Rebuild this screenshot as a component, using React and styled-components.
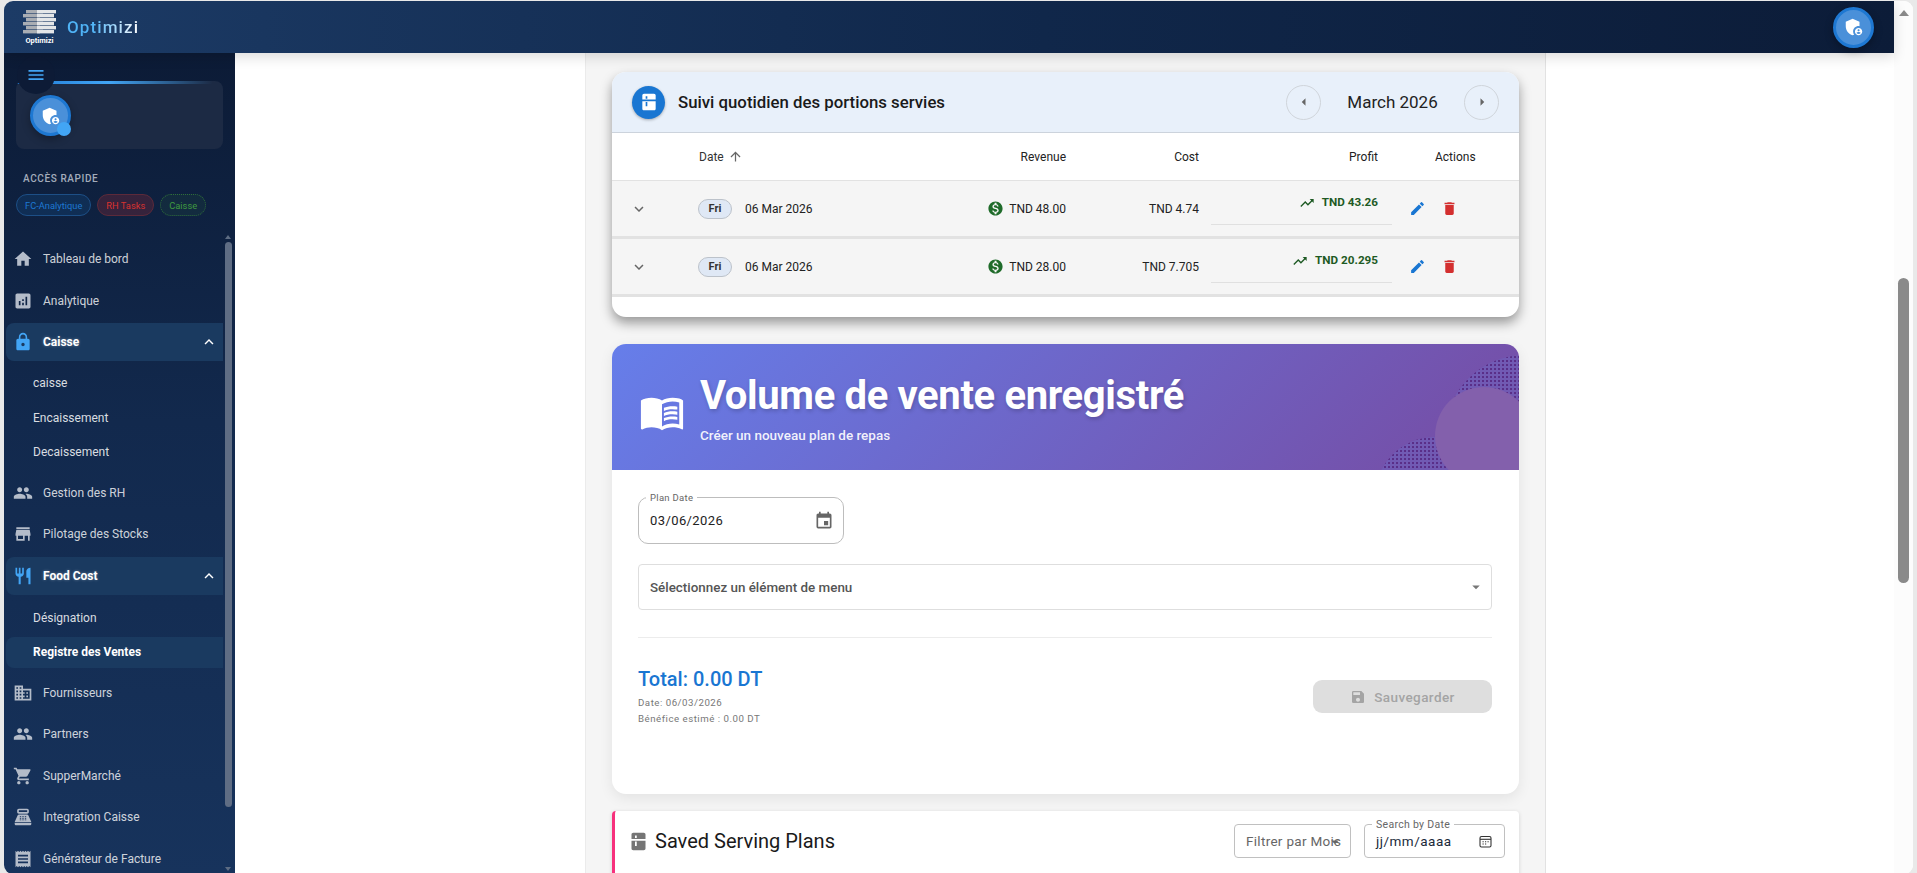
import React from "react";
import styled, { createGlobalStyle } from "styled-components";
import {
  MdHome, MdAnalytics, MdLock, MdPeople, MdStore, MdRestaurant, MdDomain,
  MdShoppingCart, MdPointOfSale, MdReceipt, MdKitchen, MdAdminPanelSettings,
  MdMenuBook, MdEdit, MdDelete, MdTrendingUp, MdMonetizationOn, MdKeyboardArrowDown,
  MdKeyboardArrowUp, MdArrowLeft, MdArrowRight, MdArrowUpward, MdEvent, MdSave,
  MdArrowDropDown, MdMenu,
} from "react-icons/md";

const GlobalStyle = createGlobalStyle`
  html, body { margin: 0; padding: 0; height: 100%; overflow: hidden; background: #e9e9e9; }
  * { box-sizing: border-box; }
  body { font-family: Roboto, "Liberation Sans", sans-serif; }
`;

const Frame = styled.div`
  display: flex;
  height: 873px;
  margin: 1px 4px 0;
  background: #fff;
  border-radius: 9px;
  overflow: hidden;
`;

const Page = styled.div`
  flex: 1;
  min-width: 0;
  display: flex;
  flex-direction: column;
`;

const TopBar = styled.header`
  position: relative;
  z-index: 3;
  flex: 0 0 52px;
  display: flex;
  align-items: center;
  justify-content: space-between;
  padding: 0 0 0 18px;
  background: linear-gradient(90deg, #1c3b66 0%, #10274a 55%, #0c1c38 100%);
  box-shadow: 0 4px 12px rgba(0, 0, 0, 0.14);
`;

const Brand = styled.div`
  display: flex;
  align-items: center;
  gap: 10px;
`;

const LogoBox = styled.div`
  display: flex;
  flex-direction: column;
  align-items: center;
  width: 35px;
`;

const LogoText = styled.span`
  margin-top: 2px;
  font-size: 7.5px;
  line-height: 9px;
  font-weight: 700;
  color: #fff;
`;

const BrandName = styled.span`
  font-size: 17px;
  font-weight: 500;
  letter-spacing: 1.1px;
  background: linear-gradient(90deg, #4fb3f6 0%, #4fb3f6 35%, #ffffff 100%);
  -webkit-background-clip: text;
  background-clip: text;
  color: transparent;
`;

const Avatar = styled.div`
  position: relative;
  flex: none;
  display: flex;
  align-items: center;
  justify-content: center;
  width: 41px;
  height: 41px;
  border-radius: 50%;
  background: #4a90d9;
  border: 3px solid #1e78d2;
  color: #fff;
  box-shadow: 0 3px 8px rgba(0, 0, 0, 0.3);
`;

const TopAvatar = styled(Avatar)`
  margin-right: 20px;
`;

const Body = styled.div`
  flex: 1;
  min-height: 0;
  display: flex;
`;

const Sidebar = styled.aside`
  position: relative;
  flex: 0 0 231px;
  display: flex;
  flex-direction: column;
  background: linear-gradient(180deg, #0c1b36 0%, #12294d 45%, #17335c 100%);
`;

const SideHead = styled.div`
  flex: 0 0 179px;
  padding: 28px 12px 0;
`;

const MenuButton = styled.div`
  position: absolute;
  left: 13px;
  top: 3px;
  z-index: 2;
  display: flex;
  align-items: center;
  justify-content: center;
  width: 38px;
  height: 38px;
  border-radius: 50%;
  background: #0d1b36;
  color: #42a5f5;
`;

const ProfileCard = styled.div`
  position: relative;
  height: 68px;
  padding: 14px 14px;
  border-radius: 8px;
  background: #1c2a44;
  overflow: hidden;

  &::before {
    content: "";
    position: absolute;
    top: 0;
    left: 0;
    width: 100%;
    height: 3px;
    background: linear-gradient(90deg, #1e78d2 0%, #42a5f5 45%, transparent 95%);
  }
`;

const ProfileAvatar = styled(Avatar)`
  overflow: visible;
`;

const OnlineDot = styled.span`
  position: absolute;
  right: -3px;
  bottom: -3px;
  width: 14px;
  height: 14px;
  border-radius: 50%;
  background: #42a5f5;
`;

const QuickTitle = styled.div`
  margin: 24px 0 9px 7px;
  font-size: 10px;
  line-height: 12px;
  letter-spacing: 0.6px;
  font-weight: 500;
  color: #a3acbb;
`;

const ChipRow = styled.div`
  display: flex;
  gap: 6px;
`;

const QuickChip = styled.span`
  display: flex;
  align-items: center;
  height: 22px;
  padding: 0 8px;
  border-radius: 11px;
  font-size: 9.3px;
  color: ${(p) => p.$color};
  background: ${(p) => p.$bg};
  border: 1px ${(p) => p.$line || "solid"} ${(p) => p.$border};
`;

const NavArea = styled.div`
  flex: 1;
  min-height: 0;
  display: flex;
`;

const NavList = styled.nav`
  flex: 1;
  min-width: 0;
  padding: 8px 0 0 2px;
  overflow: hidden;
`;

const NavItem = styled.div`
  display: flex;
  align-items: center;
  height: 38px;
  margin-bottom: 3.5px;
  padding: 0 5px 0 7px;
  border-radius: 8px 0 0 8px;
  font-size: 12px;
  white-space: nowrap;
  font-weight: ${(p) => (p.$open ? 700 : 400)};
  color: ${(p) => (p.$open ? "#fff" : "rgba(255,255,255,0.8)")};
  background: ${(p) => (p.$open ? "#1a3a60" : "transparent")};
  text-shadow: ${(p) => (p.$open ? "0 0 3px rgba(255,255,255,0.35)" : "none")};

  svg:first-child {
    flex: none;
    font-size: 20px;
    margin-right: 10px;
    color: ${(p) => (p.$open ? "#42a5f5" : "#b4bcc9")};
  }
`;

const ItemLabel = styled.span`
  flex: 1;
`;

const SubList = styled.div`
  padding: ${(p) => p.$top}px 0 2.5px;
`;

const SubItem = styled.div`
  display: flex;
  align-items: center;
  height: 31px;
  margin-bottom: 3.5px;
  padding-left: 27px;
  border-radius: 8px 0 0 8px;
  font-size: 12px;
  font-weight: ${(p) => (p.$active ? 700 : 400)};
  color: ${(p) => (p.$active ? "#fff" : "rgba(255,255,255,0.85)")};
  background: ${(p) => (p.$active ? "#1a3a60" : "transparent")};
`;

const SideScroll = styled.div`
  flex: 0 0 12px;
  display: flex;
  flex-direction: column;
  align-items: center;
  padding-right: 2px;
`;

const SideArrow = styled.span`
  width: 0;
  height: 0;
  margin: 3px 0;
  border-left: 3.5px solid transparent;
  border-right: 3.5px solid transparent;
  border-${(p) => (p.$down ? "top" : "bottom")}: 4px solid #5d6c83;
`;

const SideThumb = styled.div`
  width: 7px;
  height: 565px;
  border-radius: 4px;
  background: #5f6d84;
`;

const SideSpacer = styled.div`
  flex: 1;
`;

const Main = styled.main`
  flex: 1;
  min-width: 0;
  display: flex;
  justify-content: center;
  overflow: hidden;
`;

const Panel = styled.div`
  flex: 0 0 961px;
  margin-left: 2px;
  padding: 19px 26px 0;
  background: #f5f5f5;
  border-left: 1px solid #ebebeb;
  border-right: 1px solid #e2e2e2;
`;

const TableCard = styled.section`
  height: 245px;
  margin-bottom: 27px;
  background: #fff;
  border-radius: 14px;
  overflow: hidden;
  box-shadow: 0 6px 12px rgba(0, 0, 0, 0.38);
`;

const TableHeader = styled.div`
  display: flex;
  align-items: center;
  height: 61px;
  padding: 0 20px;
  background: #e8f0fa;
  border-bottom: 1px solid #ccd3dc;
`;

const RoundIcon = styled.div`
  display: flex;
  align-items: center;
  justify-content: center;
  width: 33px;
  height: 33px;
  margin-right: 13px;
  border-radius: 50%;
  background: #1976d2;
  color: #fff;
  box-shadow: 0 1px 3px rgba(0, 0, 0, 0.3);
`;

const CardTitle = styled.h2`
  flex: 1;
  margin: 0;
  font-size: 16.8px;
  font-weight: 500;
  color: #1a1a1a;
`;

const MonthNav = styled.div`
  display: flex;
  align-items: center;
`;

const RoundButton = styled.div`
  display: flex;
  align-items: center;
  justify-content: center;
  width: 35px;
  height: 35px;
  border-radius: 50%;
  border: 1px solid #cfd4da;
  color: #666;
  font-size: 18px;
`;

const MonthLabel = styled.span`
  width: 143px;
  text-align: center;
  font-size: 17px;
  color: #222;
`;

const GridRow = styled.div`
  display: grid;
  grid-template-columns: 71px 267px 132px 129px 181px 127px;
  font-size: 12px;
  color: #222;
`;

const HeadRow = styled(GridRow)`
  height: 48px;
  align-items: center;
  border-bottom: 1px solid #e2e2e2;
`;

const DataRow = styled(GridRow)`
  height: 58px;
  align-items: center;
  background: #f5f5f5;
  border-bottom: 3px solid #e2e2e2;
`;

const DateHead = styled.div`
  display: flex;
  align-items: center;
  gap: 4px;
  padding-left: 16px;
  color: #333;

  svg {
    font-size: 15px;
    color: #666;
  }
`;

const RightCell = styled.div`
  display: flex;
  align-items: center;
  justify-content: flex-end;
  gap: 5px;
  padding-right: ${(p) => p.$pad || 16}px;
`;

const ActionsHead = styled.div`
  padding-left: 43px;
`;

const ExpandCell = styled.div`
  display: flex;
  padding-left: 18px;
  font-size: 18px;
  color: #666;
`;

const DateCell = styled.div`
  display: flex;
  align-items: center;
  gap: 13px;
  padding-left: 15px;
`;

const DayChip = styled.span`
  display: flex;
  align-items: center;
  justify-content: center;
  width: 34px;
  height: 20px;
  border-radius: 10px;
  border: 1px solid #bcc2ca;
  background: #dfe8f5;
  font-size: 11px;
  font-weight: 700;
  color: #333;
`;

const MoneyIcon = styled(MdMonetizationOn)`
  font-size: 17px;
  color: #1f6b2a;
`;

const ProfitCell = styled.div`
  align-self: stretch;
  display: flex;
  flex-direction: column;
`;

const ProfitValue = styled.div`
  flex: 0 0 44px;
  display: flex;
  justify-content: flex-end;
  align-items: center;
  gap: 7px;
  padding: 0 14px 0 0;
  border-bottom: 1px solid #e0e0e0;
  font-size: 11.7px;
  font-weight: 700;
  color: #1e5a24;

  span {
    display: block;
    margin-bottom: 1px;
  }

  svg {
    font-size: 16px;
  }
`;

const ActionCell = styled.div`
  display: flex;
  align-items: center;
  gap: 15px;
  padding-left: 17px;
  font-size: 17px;
`;

const EditIcon = styled(MdEdit)`
  color: #1976d2;
`;

const DeleteIcon = styled(MdDelete)`
  color: #d32f2f;
`;

const FormCard = styled.section`
  height: 450px;
  margin-bottom: 17px;
  background: #fff;
  border-radius: 14px;
  overflow: hidden;
  box-shadow: 0 4px 14px rgba(0, 0, 0, 0.08);
`;

const Banner = styled.div`
  position: relative;
  display: flex;
  align-items: center;
  height: 126px;
  padding: 0 26px 0 27px;
  overflow: hidden;
  color: #fff;
  background: linear-gradient(135deg, #667eea 0%, #764ba2 100%);
`;

const BannerIcon = styled(MdMenuBook)`
  flex: none;
  margin: 10px 15px 0 0;
  font-size: 46px;
`;

const BannerTitle = styled.h1`
  margin: 0 0 9px;
  font-size: 40px;
  line-height: 47px;
  font-weight: 700;
  letter-spacing: -0.36px;
  text-shadow: 1px 2px 4px rgba(0, 0, 0, 0.2);
`;

const BannerSub = styled.div`
  font-size: 13.5px;
  line-height: 15px;
  font-weight: 500;
  color: rgba(255, 255, 255, 0.92);
`;

const Bubble = styled.span`
  position: absolute;
  left: ${(p) => p.$x}px;
  top: ${(p) => p.$y}px;
  width: ${(p) => p.$size}px;
  height: ${(p) => p.$size}px;
  border-radius: 50%;
  background: ${(p) =>
    p.$dotted
      ? "radial-gradient(circle, #5a2e88 0.7px, transparent 1px) 0 0 / 4px 4px, rgba(110, 100, 190, 0.5)"
      : "#8360ac"};
`;

const FormBody = styled.div`
  padding: 27px 27px 0 26px;
`;

const OutlinedDate = styled.div`
  position: relative;
  display: flex;
  align-items: center;
  justify-content: space-between;
  width: 206px;
  height: 47px;
  padding: 0 9px 0 11px;
  border: 1px solid #bdbdbd;
  border-radius: 10px;
  font-size: 13px;
  letter-spacing: 0.4px;
  color: #222;

  svg {
    font-size: 20px;
    color: #666;
  }
`;

const FloatLabel = styled.span`
  position: absolute;
  left: ${(p) => p.$left || 7}px;
  top: -6px;
  padding: 0 4px;
  background: #fff;
  font-size: ${(p) => p.$size || 9.5}px;
  line-height: 12px;
  letter-spacing: 0.3px;
  color: #666;
`;

const MenuSelect = styled.div`
  display: flex;
  align-items: center;
  justify-content: space-between;
  height: 46px;
  margin-top: 20px;
  padding: 0 6px 0 11px;
  border: 1px solid #dedede;
  border-radius: 4px;
  font-size: 13.4px;
  font-weight: 500;
  color: #555;

  svg {
    font-size: 18px;
    color: #777;
  }
`;

const Divider = styled.hr`
  margin: 27px 0 0;
  border: 0;
  border-top: 1px solid #ececec;
`;

const SummaryRow = styled.div`
  display: flex;
  align-items: flex-start;
  justify-content: space-between;
  padding-top: 29px;
`;

const TotalText = styled.div`
  font-size: 20px;
  line-height: 24px;
  font-weight: 500;
  color: #1976d2;
`;

const MetaText = styled.div`
  margin-top: ${(p) => p.$top || 0}px;
  font-size: 9.7px;
  line-height: 16px;
  letter-spacing: 0.5px;
  color: #777;
`;

const SaveButton = styled.div`
  display: flex;
  align-items: center;
  justify-content: center;
  gap: 8px;
  width: 179px;
  height: 33px;
  margin-top: 13px;
  border-radius: 9px;
  background: #dedede;
  font-size: 13.5px;
  font-weight: 500;
  letter-spacing: 0.4px;
  color: #a4a4a4;

  svg {
    font-size: 16px;
  }
`;

const SavedCard = styled.section`
  display: flex;
  align-items: flex-start;
  justify-content: space-between;
  height: 120px;
  padding: 13px 14px 0 13px;
  background: #fff;
  border-left: 3px solid #f7317c;
  border-radius: 4px;
  box-shadow: 0 1px 4px rgba(0, 0, 0, 0.14);
`;

const SavedTitle = styled.div`
  display: flex;
  align-items: center;
  height: 34px;
  gap: 6px;
  font-size: 20px;
  color: #1a1a1a;

  svg {
    font-size: 21px;
    color: #757575;
  }
`;

const Filters = styled.div`
  display: flex;
  gap: 13px;
`;

const FilterSelect = styled.div`
  position: relative;
  display: flex;
  align-items: center;
  width: 117px;
  height: 34px;
  padding-left: 11px;
  border: 1px solid #c0c0c0;
  border-radius: 4px;
  font-size: 13.5px;
  letter-spacing: 0.3px;
  white-space: nowrap;
  color: #666;

  svg {
    position: absolute;
    right: 6px;
    top: 8px;
    font-size: 18px;
    color: #666;
  }
`;

const FilterDate = styled.div`
  position: relative;
  display: flex;
  align-items: center;
  justify-content: space-between;
  width: 141px;
  height: 34px;
  padding: 0 12px 0 11px;
  border: 1px solid #c0c0c0;
  border-radius: 4px;
  font-size: 13.5px;
  letter-spacing: 0.5px;
  color: #1a2a3a;
`;

const PageScroll = styled.div`
  position: relative;
  flex: 0 0 19px;
  display: flex;
  flex-direction: column;
  align-items: center;
  background: #fcfcfc;
`;

const PageArrow = styled.span`
  width: 0;
  height: 0;
  margin-top: 9px;
  border-left: 5px solid transparent;
  border-right: 5px solid transparent;
  border-bottom: 6px solid #8a8a8a;
`;

const PageThumb = styled.div`
  width: 11px;
  height: 305px;
  margin-top: 262px;
  border-radius: 6px;
  background: #8a8a8a;
`;

const LogoMark = () => (
  <svg width="33" height="24" viewBox="0 0 33 24">
    {[0, 4, 8, 12, 16, 20].map((y, i) => (
      <g key={y}>
        <rect x={i % 2 ? 0 : 3} y={y} width="17" height="3.4" fill="#a9adb3" />
        <rect x="14" y={y} width={i % 2 ? 17 : 19} height="3.4" fill="#e4e6e8" />
      </g>
    ))}
  </svg>
);

const CalendarGlyph = () => (
  <svg width="13" height="13" viewBox="0 0 13 13" fill="none" stroke="#333" strokeWidth="1.1">
    <rect x="1" y="1.5" width="11" height="10.5" rx="1.5" />
    <path d="M1 4.3h11" />
    <path d="M3.5 6.7h1.2M6 6.7h1.2M8.5 6.7h1.2M3.5 9h1.2M6 9h1.2" />
  </svg>
);

const rows = [
  { id: 1, revenue: "TND 48.00", cost: "TND 4.74", profit: "TND 43.26" },
  { id: 2, revenue: "TND 28.00", cost: "TND 7.705", profit: "TND 20.295" },
];

const App = () => {
  return (
    <>
      <GlobalStyle />
      <Frame>
        <Page>
          <TopBar>
            <Brand>
              <LogoBox>
                <LogoMark />
                <LogoText>Optimizi</LogoText>
              </LogoBox>
              <BrandName>Optimizi</BrandName>
            </Brand>
            <TopAvatar>
              <MdAdminPanelSettings size={22} />
            </TopAvatar>
          </TopBar>

          <Body>
            <Sidebar>
              <MenuButton>
                <MdMenu size={20} />
              </MenuButton>
              <SideHead>
                <ProfileCard>
                  <ProfileAvatar>
                    <MdAdminPanelSettings size={22} />
                    <OnlineDot />
                  </ProfileAvatar>
                </ProfileCard>
                <QuickTitle>ACCÈS RAPIDE</QuickTitle>
                <ChipRow>
                  <QuickChip $color="#1e78d2" $bg="rgba(30,120,210,0.15)" $border="#1d4f86">FC-Analytique</QuickChip>
                  <QuickChip $color="#d8322f" $bg="rgba(211,47,47,0.2)" $border="#5c2a3a">RH Tasks</QuickChip>
                  <QuickChip $color="#3f9a3f" $bg="rgba(56,142,60,0.1)" $border="#2f6e3a" $line="dotted">Caisse</QuickChip>
                </ChipRow>
              </SideHead>

              <NavArea>
                <NavList>
                  <NavItem><MdHome /><ItemLabel>Tableau de bord</ItemLabel></NavItem>
                  <NavItem><MdAnalytics /><ItemLabel>Analytique</ItemLabel></NavItem>
                  <NavItem $open><MdLock /><ItemLabel>Caisse</ItemLabel><MdKeyboardArrowUp size={18} /></NavItem>
                  <SubList $top={3}>
                    <SubItem>caisse</SubItem>
                    <SubItem>Encaissement</SubItem>
                    <SubItem>Decaissement</SubItem>
                  </SubList>
                  <NavItem><MdPeople /><ItemLabel>Gestion des RH</ItemLabel></NavItem>
                  <NavItem><MdStore /><ItemLabel>Pilotage des Stocks</ItemLabel></NavItem>
                  <NavItem $open><MdRestaurant /><ItemLabel>Food Cost</ItemLabel><MdKeyboardArrowUp size={18} /></NavItem>
                  <SubList $top={4}>
                    <SubItem>Désignation</SubItem>
                    <SubItem $active>Registre des Ventes</SubItem>
                  </SubList>
                  <NavItem><MdDomain /><ItemLabel>Fournisseurs</ItemLabel></NavItem>
                  <NavItem><MdPeople /><ItemLabel>Partners</ItemLabel></NavItem>
                  <NavItem><MdShoppingCart /><ItemLabel>SupperMarché</ItemLabel></NavItem>
                  <NavItem><MdPointOfSale /><ItemLabel>Integration Caisse</ItemLabel></NavItem>
                  <NavItem><MdReceipt /><ItemLabel>Générateur de Facture</ItemLabel></NavItem>
                </NavList>
                <SideScroll>
                  <SideArrow />
                  <SideThumb />
                  <SideSpacer />
                  <SideArrow $down />
                </SideScroll>
              </NavArea>
            </Sidebar>

            <Main>
              <Panel>
                <TableCard>
                  <TableHeader>
                    <RoundIcon><MdKitchen size={20} /></RoundIcon>
                    <CardTitle>Suivi quotidien des portions servies</CardTitle>
                    <MonthNav>
                      <RoundButton><MdArrowLeft /></RoundButton>
                      <MonthLabel>March 2026</MonthLabel>
                      <RoundButton><MdArrowRight /></RoundButton>
                    </MonthNav>
                  </TableHeader>
                  <HeadRow>
                    <span />
                    <DateHead>Date <MdArrowUpward /></DateHead>
                    <RightCell>Revenue</RightCell>
                    <RightCell $pad={12}>Cost</RightCell>
                    <RightCell $pad={14}>Profit</RightCell>
                    <ActionsHead>Actions</ActionsHead>
                  </HeadRow>
                  {rows.map((row) => (
                    <DataRow key={row.id}>
                      <ExpandCell><MdKeyboardArrowDown /></ExpandCell>
                      <DateCell>
                        <DayChip>Fri</DayChip>
                        06 Mar 2026
                      </DateCell>
                      <RightCell><MoneyIcon />{row.revenue}</RightCell>
                      <RightCell $pad={12}>{row.cost}</RightCell>
                      <ProfitCell>
                        <ProfitValue><MdTrendingUp /><span>{row.profit}</span></ProfitValue>
                      </ProfitCell>
                      <ActionCell><EditIcon /><DeleteIcon /></ActionCell>
                    </DataRow>
                  ))}
                </TableCard>

                <FormCard>
                  <Banner>
                    <Bubble $dotted $x={833} $y={11} $size={160} />
                    <Bubble $dotted $x={763} $y={93} $size={120} />
                    <Bubble $x={823} $y={43} $size={98} />
                    <BannerIcon />
                    <div>
                      <BannerTitle>Volume de vente enregistré</BannerTitle>
                      <BannerSub>Créer un nouveau plan de repas</BannerSub>
                    </div>
                  </Banner>
                  <FormBody>
                    <OutlinedDate>
                      <FloatLabel>Plan Date</FloatLabel>
                      03/06/2026
                      <MdEvent />
                    </OutlinedDate>
                    <MenuSelect>
                      Sélectionnez un élément de menu
                      <MdArrowDropDown />
                    </MenuSelect>
                    <Divider />
                    <SummaryRow>
                      <div>
                        <TotalText>Total: 0.00 DT</TotalText>
                        <MetaText $top={4}>Date: 06/03/2026</MetaText>
                        <MetaText>Bénéfice estimé : 0.00 DT</MetaText>
                      </div>
                      <SaveButton><MdSave />Sauvegarder</SaveButton>
                    </SummaryRow>
                  </FormBody>
                </FormCard>

                <SavedCard>
                  <SavedTitle><MdKitchen />Saved Serving Plans</SavedTitle>
                  <Filters>
                    <FilterSelect>Filtrer par Mois<MdArrowDropDown /></FilterSelect>
                    <FilterDate>
                      <FloatLabel $size={10.5}>Search by Date</FloatLabel>
                      jj/mm/aaaa
                      <CalendarGlyph />
                    </FilterDate>
                  </Filters>
                </SavedCard>
              </Panel>
            </Main>
          </Body>
        </Page>
        <PageScroll>
          <PageArrow />
          <PageThumb />
        </PageScroll>
      </Frame>
    </>
  );
};

export default App;
